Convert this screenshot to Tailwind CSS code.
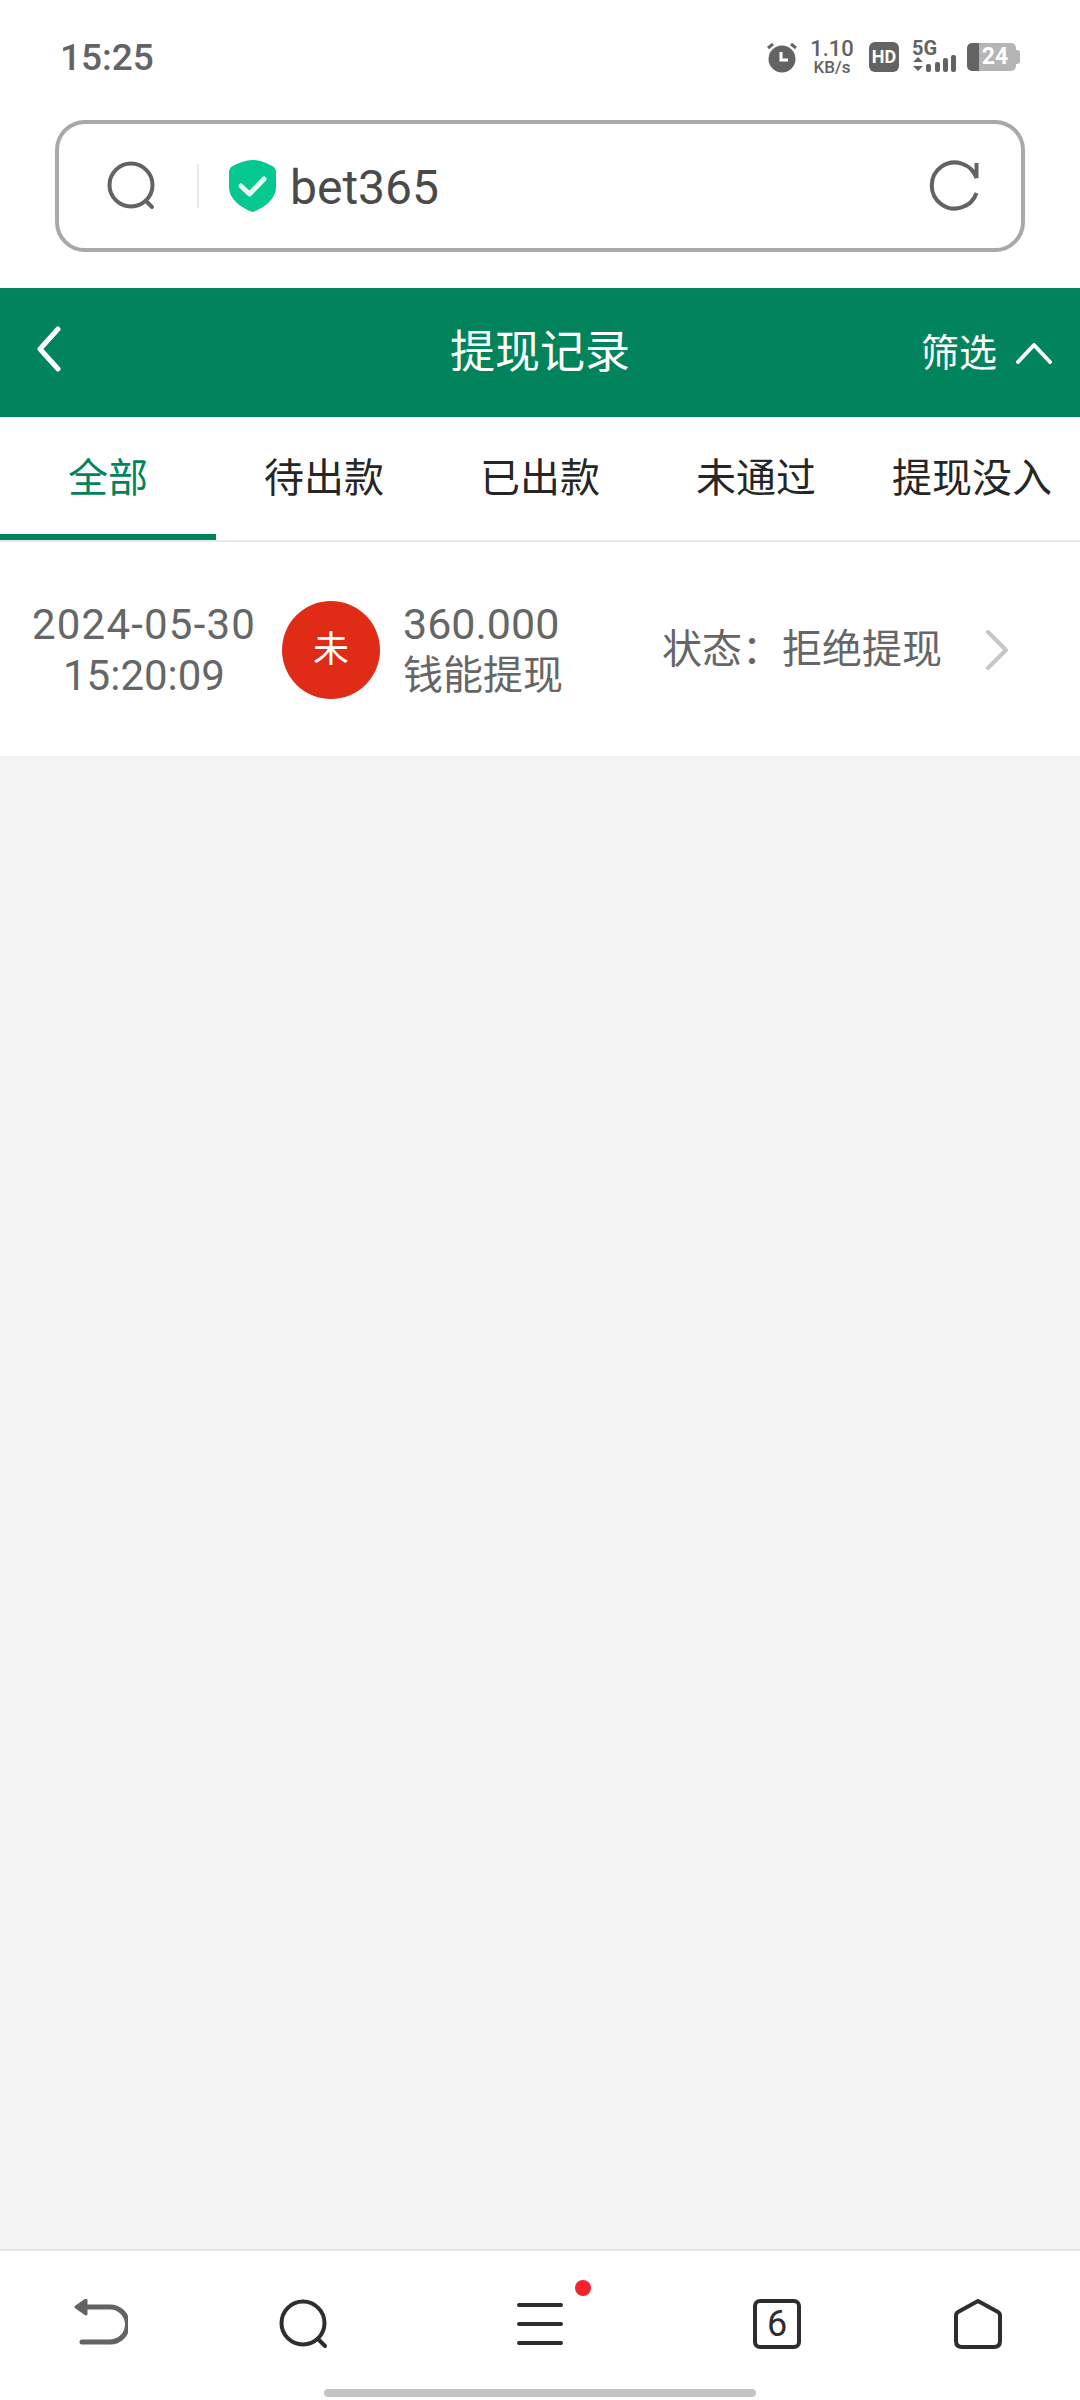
<!DOCTYPE html>
<html lang="zh-CN">
<head>
    <meta charset="UTF-8">
    <meta name="viewport" content="width=device-width, initial-scale=1.0">
    <title>提现记录</title>
    <script src="https://cdn.jsdelivr.net/npm/@tailwindcss/browser@4"></script>
</head>
<body class="font-['Roboto','Noto_Sans_CJK_SC',sans-serif] bg-white">
<div class="w-[1080px] h-[2400px] flex flex-col bg-white overflow-hidden">

    <!-- Status bar -->
    <div class="h-[114px] shrink-0 flex items-center justify-between pl-[60px] pr-[60px] text-[#636363]">
        <span class="text-[37px] font-medium leading-none">15:25</span>
        <div class="flex items-center">
            <svg class="w-[32px] h-[32px]" viewBox="0 0 32 32">
                <circle cx="16" cy="18" r="13.5" fill="#636363"/>
                <path d="M15 11v8h7" fill="none" stroke="#fff" stroke-width="3"/>
                <path d="M2 7l5-4M30 7l-5-4" fill="none" stroke="#636363" stroke-width="3"/>
            </svg>
            <div class="ml-[12px] w-[44px] flex flex-col items-center font-medium">
                <span class="text-[22px] leading-[20px]">1.10</span>
                <span class="text-[17px] leading-[16px]">KB/s</span>
            </div>
            <div class="ml-[15px] w-[30px] h-[30px] rounded-[6px] bg-[#636363] text-white text-[18px] font-bold leading-none flex items-center justify-center">HD</div>
            <div class="ml-[13px] w-[44px] h-[32px] relative">
                <span class="absolute left-0 top-[-3px] text-[20px] font-bold leading-none">5G</span>
                <svg class="absolute left-0 top-0 w-[44px] h-[32px]" viewBox="0 0 44 32">
                    <path d="M1 21l5-5 5 5zM1 25h10l-5 5z" fill="#636363"/>
                    <rect x="14" y="23" width="5" height="8" rx="2" fill="#636363"/>
                    <rect x="23" y="21" width="5" height="10" rx="2" fill="#636363"/>
                    <rect x="31" y="17" width="5" height="14" rx="2" fill="#636363"/>
                    <rect x="39" y="14" width="5" height="17" rx="2" fill="#636363"/>
                </svg>
            </div>
            <div class="ml-[11px] relative w-[53px] h-[28px] flex">
                <div class="w-[12px] h-full bg-[#636363] rounded-l-[5px]"></div>
                <div class="w-[37px] h-full bg-[#b5b5b5] rounded-r-[5px]"></div>
                <div class="w-[4px] h-[14px] my-auto bg-[#b5b5b5] rounded-r-[3px]"></div>
                <span class="absolute left-[13px] top-0 w-[30px] text-center text-white text-[23px] font-bold leading-[28px]">24</span>
            </div>
        </div>
    </div>

    <!-- Address bar -->
    <div class="mx-[55px] h-[132px] mt-[6px] shrink-0 rounded-[30px] border-[4px] border-[#a8a8a8] flex items-center pl-[48px] pr-[42px]">
        <svg class="w-[50px] h-[50px] shrink-0" viewBox="0 0 50 50" fill="none" stroke="#636363" stroke-width="4" stroke-linecap="round">
            <circle cx="24" cy="24" r="21.5"/>
            <path d="M39 40l6 6"/>
        </svg>
        <div class="ml-[40px] w-[2px] h-[44px] bg-[#e8e8e8] shrink-0"></div>
        <svg class="ml-[30px] w-[47px] h-[52px] shrink-0" viewBox="0 0 47 52">
            <path d="M23.5 0C30 0 38 3 44 6.500Q47 8.500 47 12V27C47 39 35 48 23.500 52C12 48 0 39 0 27V12Q0 8.500 3 6.500C9 3 17 0 23.500 0Z" fill="#04c88f"/>
            <path d="M12 26l8.500 8L35 19" fill="none" stroke="#e8fbf5" stroke-width="5" stroke-linecap="round" stroke-linejoin="round"/>
        </svg>
        <span class="ml-[14px] mt-[4px] text-[48px] leading-none text-[#4a4a4a]">bet365</span>
        <svg class="ml-auto w-[50px] h-[52px] shrink-0" viewBox="0 0 50 52" fill="none" stroke="#636363" stroke-width="4">
            <path d="M47.500 33A23 23 0 1 1 47.500 18V3"/>
        </svg>
    </div>

    <!-- Page header -->
    <div class="mt-[36px] h-[129px] shrink-0 bg-[#01835b] relative flex items-center justify-center text-white">
        <svg class="absolute left-[36px] top-[38px] w-[26px] h-[46px]" viewBox="0 0 26 46" fill="none" stroke="#fff" stroke-width="5" stroke-linecap="round" stroke-linejoin="round">
            <path d="M22 3L4 23l18 20"/>
        </svg>
        <span class="text-[45px] leading-none">提现记录</span>
        <div class="absolute left-[921px] top-0 h-full flex items-center">
            <span class="text-[38px] leading-none">筛选</span>
            <svg class="ml-[19px] w-[36px] h-[22px]" viewBox="0 0 36 22" fill="none" stroke="#fff" stroke-width="4" stroke-linecap="round" stroke-linejoin="round">
                <path d="M2 20L18 3l16 17"/>
            </svg>
        </div>
    </div>

    <!-- Tabs -->
    <div class="h-[125px] shrink-0 grid grid-cols-5 border-b-2 border-[#e8e8e8] text-[40px] text-[#262626]">
        <div class="relative flex items-center justify-center text-[#01835b]">全部
            <div class="absolute left-0 right-0 bottom-0 h-[6px] bg-[#01835b]"></div>
        </div>
        <div class="flex items-center justify-center">待出款</div>
        <div class="flex items-center justify-center">已出款</div>
        <div class="flex items-center justify-center">未通过</div>
        <div class="flex items-center justify-center whitespace-nowrap">提现没入</div>
    </div>

    <!-- Record row -->
    <div class="h-[214px] shrink-0 flex items-center pl-[32px] pt-[2px] text-[#666666]">
        <div class="w-[224px] text-center text-[42px] leading-[51px] whitespace-nowrap">
            <div class="tracking-[1.2px]">2024-05-30</div>
            <div>15:20:09</div>
        </div>
        <div class="ml-[26px] w-[98px] h-[98px] rounded-full bg-[#e02b17] text-white text-[36px] flex items-center justify-center">未</div>
        <div class="ml-[23px] w-[259px] leading-[51px]">
            <div class="text-[43px]">360.000</div>
            <div class="text-[40px]">钱能提现</div>
        </div>
        <div class="text-[40px] leading-none whitespace-nowrap">状态：拒绝提现</div>
        <svg class="ml-[43px] w-[24px] h-[40px] shrink-0" viewBox="0 0 24 40" fill="none" stroke="#c6c6c6" stroke-width="4" stroke-linecap="round" stroke-linejoin="round">
            <path d="M3 2l18 18L3 38"/>
        </svg>
    </div>

    <!-- Empty area -->
    <div class="flex-1 bg-[#f3f3f3]"></div>

    <!-- Browser toolbar -->
    <div class="h-[151px] shrink-0 border-t-2 border-[#e6e6e6]">
        <div class="h-[146px] flex items-center pl-[74px]">
            <svg class="w-[54px] h-[50px] shrink-0" viewBox="0 0 54 50" fill="none" stroke="#636363" stroke-width="5" stroke-linecap="round">
                <path d="M10 8H36A16.500 16.500 0 0 1 36 43H8"/>
                <path d="M2 8l10-7v14z" fill="#636363" stroke="#636363" stroke-width="3" stroke-linejoin="round"/>
            </svg>
            <svg class="ml-[151px] w-[50px] h-[52px] shrink-0" viewBox="0 0 50 52" fill="none" stroke="#2e2e2e" stroke-width="4" stroke-linecap="round">
                <circle cx="24" cy="25" r="21.500"/>
                <path d="M39 41l7 7"/>
            </svg>
            <div class="ml-[188px] relative shrink-0">
                <svg class="w-[46px] h-[44px]" viewBox="0 0 46 44" stroke="#2e2e2e" stroke-width="4" stroke-linecap="round">
                    <path d="M2 3H44M2 22H44M2 41H44"/>
                </svg>
                <div class="absolute left-[58px] top-[-22px] w-[16px] h-[16px] rounded-full bg-[#f5222d]"></div>
            </div>
            <div class="ml-[190px] w-[48px] h-[50px] shrink-0 rounded-[7px] border-[4px] border-[#2e2e2e] text-[#2e2e2e] text-[36px] leading-none flex items-center justify-center">6</div>
            <svg class="ml-[153px] w-[48px] h-[50px] shrink-0" viewBox="0 0 48 50" fill="none" stroke="#2e2e2e" stroke-width="4" stroke-linejoin="round">
                <path d="M24 2L44 13Q46 14 46 17V42Q46 48 40 48H8Q2 48 2 42V17Q2 14 4 13Z"/>
            </svg>
        </div>
        <div class="mx-auto -mt-[8px] w-[432px] h-[8px] rounded-full bg-[#c4c4c4]"></div>
    </div>
</div>
</body>
</html>
